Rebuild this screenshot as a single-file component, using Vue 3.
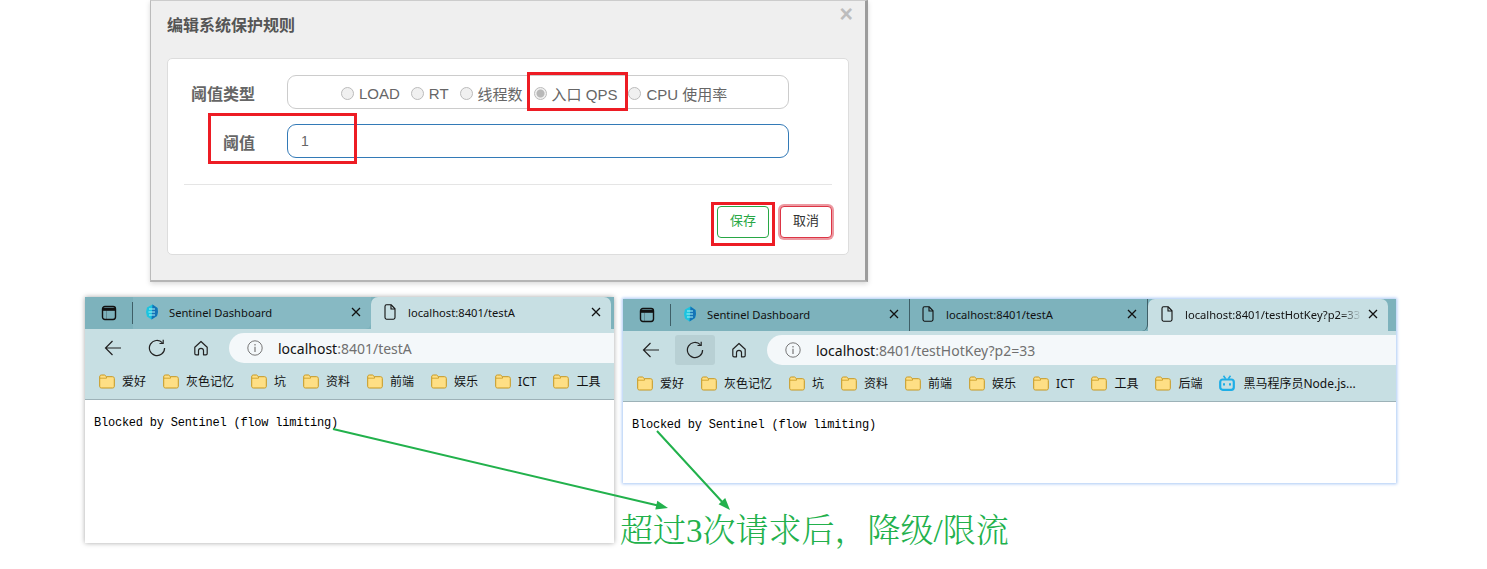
<script setup>
const types = [
  { label: 'LOAD' }, { label: 'RT' }, { label: '线程数' },
  { label: '入口 QPS', checked: true }, { label: 'CPU 使用率' }
]
const marks = ['爱好', '灰色记忆', '坑', '资料', '前端', '娱乐', 'ICT', '工具']
const windows = [
  {
    id: 'one', path: '/testA', reload: false, marks, app: false,
    tabs: [{ title: 'Sentinel Dashboard', fav: true, w: 238 }, { title: 'localhost:8401/testA', active: true, w: 240 }]
  },
  {
    id: 'two', path: '/testHotKey?p2=33', reload: true, marks: [...marks, '后端'], app: true,
    tabs: [
      { title: 'Sentinel Dashboard', fav: true, w: 238 },
      { title: 'localhost:8401/testA', w: 239, sep: true },
      { title: 'localhost:8401/testHotKey?p2=33', active: true, w: 240 }
    ]
  }
]
</script>

<template>
  <div class="canvas">
    <section class="dialog">
      <h4 class="dialog-title">编辑系统保护规则</h4>
      <span class="close">×</span>
      <div class="card">
        <div class="row">
          <label class="label">阈值类型</label>
          <div class="field radios">
            <span v-for="t in types" :key="t.label" class="radio-item">
              <i class="radio" :class="{ on: t.checked }"></i>{{ t.label }}
            </span>
          </div>
        </div>
        <div class="row">
          <label class="label">阈值</label>
          <div class="field input">1</div>
        </div>
        <div class="rule"></div>
        <div class="actions">
          <button class="btn save">保存</button>
          <button class="btn cancel">取消</button>
        </div>
      </div>
    </section>

    <article v-for="w in windows" :key="w.id" class="win" :class="w.id">
      <div class="strip">
        <div class="side">
          <svg width="16" height="16" viewBox="0 0 16 16" fill="none" stroke="#111" stroke-width="1.4">
            <rect x="1.500" y="1.500" width="13" height="13" rx="2.400" />
            <path d="M1.700 4.300h12.600" stroke-width="3" />
            <path d="M5.500 5.500V14" stroke="#111" stroke-opacity=".25" stroke-width="1" />
          </svg>
        </div>
        <span class="tab-sep"></span>
        <div
          v-for="t in w.tabs"
          :key="t.title"
          class="tab"
          :class="{ active: t.active, sep: t.sep }"
          :style="{ width: t.w + 'px' }"
        >
          <svg v-if="t.fav" class="fav" width="14" height="16" viewBox="0 0 14 16">
            <path d="M7.500 .5 12.500 4 13 8 12 12 6.500 15.500 2 12.500 1 8 2 3.500z" fill="#1cc4e0" />
            <path d="M7.500 .5 12.500 4 13 8 12 12 6.500 15.500z" fill="#1572b6" />
            <path d="M4 5h6M3.500 8h6.500M4 11h6" stroke="#a8f3f5" stroke-width="1.100" />
          </svg>
          <svg v-else class="doc" width="14" height="16" viewBox="0 0 14 16" fill="none" stroke="#111" stroke-width="1.100">
            <path d="M2 2.400C2 1.400 2.600 .8 3.500 .8H8.200L12 4.800V13.600C12 14.500 11.400 15.200 10.500 15.200H3.500C2.600 15.200 2 14.500 2 13.600z" />
            <path d="M8 1V5H12" />
          </svg>
          <span class="tab-title" :class="{ fade: t.title.length > 25 }">{{ t.title }}</span>
          <svg class="x" width="10" height="10" viewBox="0 0 10 10" stroke="#111" stroke-width="1.300">
            <path d="M1 1 9 9M9 1 1 9" />
          </svg>
        </div>
      </div>

      <div class="toolbar">
        <span class="tool">
          <svg width="18" height="18" viewBox="0 0 18 18" fill="none" stroke="#222" stroke-width="1.200">
            <path d="M17 9H1.500M8.500 2 1.500 9l7 7" />
          </svg>
        </span>
        <span class="tool" :class="{ hover: w.reload }">
          <svg width="18" height="18" viewBox="0 0 18 18" fill="none" stroke="#222" stroke-width="1.200">
            <path d="M14.500 3.800A7.600 7.600 0 1 0 16.600 9" />
            <path d="M15.200 .8v3.700h-3.700" />
          </svg>
        </span>
        <span class="tool">
          <svg width="16" height="16" viewBox="0 0 16 16" fill="none" stroke="#222" stroke-width="1.200">
            <path d="M1.800 7.200 8 1.500 14.200 7.200V13.500Q14.200 14.800 12.900 14.800H10.500V10.500Q10.500 8.300 8 8.300 5.500 8.300 5.500 10.500V14.800H3.100Q1.800 14.800 1.800 13.500z" stroke-linejoin="round" />
          </svg>
        </span>
        <div class="address">
          <svg width="16" height="16" viewBox="0 0 16 16" fill="none" stroke="#777" stroke-width="1">
            <circle cx="8" cy="8" r="7.200" />
            <path d="M8 6.800V12M8 4v1.400" stroke-width="1.200" />
          </svg>
          <span class="url"><b>localhost</b>:8401{{ w.path }}</span>
        </div>
      </div>

      <div class="bookmarks">
        <span v-for="m in w.marks" :key="m" class="mark">
          <svg width="16" height="15" viewBox="0 0 16 15">
            <path d="M.7 3C.7 1.600 1.400 1 2.500 1H5.500L7.500 2.700H13.500C14.600 2.700 15.300 3.400 15.300 4.500V12.300C15.300 13.400 14.600 14 13.500 14H2.500C1.400 14 .7 13.400 .7 12.300z" fill="#fedf85" stroke="#c8981e" stroke-width="1" />
            <path d="M1 4.200 7.500 4.200 7.500 2.700" fill="none" stroke="#c8981e" stroke-width=".8" />
          </svg>
          {{ m }}
        </span>
        <span v-if="w.app" class="mark app">
          <svg width="16" height="16" viewBox="0 0 16 16" fill="none" stroke="#1eaee6" stroke-width="2.200">
            <rect x="1.200" y="4.500" width="13.600" height="10.300" rx="2.500" />
            <path d="M4.500 .8 6.600 3.800M11.500 .8 9.400 3.800" stroke-width="1.500" />
            <path d="M5 8.300v2.200M11 8.300v2.200" stroke-width="2" />
          </svg>
          黑马程序员Node.js...
        </span>
      </div>

      <div class="page">Blocked by Sentinel (flow limiting)</div>
    </article>

    <i class="flag flag-qps"></i>
    <i class="flag flag-value"></i>
    <i class="flag flag-save"></i>

    <svg class="arrows" width="1487" height="569" viewBox="0 0 1487 569">
      <path d="M333 429 660 506M657 431 725 505" stroke="#22b14c" stroke-width="2" fill="none" />
      <path d="M668 508 655.300 509.600 657.300 500.800z" fill="#22b14c" />
      <path d="M730 510 718.600 504.300 725.200 498.100z" fill="#22b14c" />
    </svg>

    <p class="note">超过3次请求后，降级/限流</p>
  </div>
</template>

<style scoped>
.canvas {
  position: relative;
  width: 1487px;
  height: 569px;
  background: #fff;
  overflow: hidden;
  font-family: "Liberation Sans", "Noto Sans CJK SC", sans-serif;
}
.dialog {
  position: absolute;
  left: 150px;
  top: 0;
  width: 718px;
  height: 282px;
  box-sizing: border-box;
  padding: 1px 0 0 2px;
  background: #efefef;
  border-top: 1px solid #ccc;
  border-left: 1px solid #bbb;
  border-right: 3px solid #9c9c9c;
  border-bottom: 2px solid #b5b5b5;
  box-shadow: 0 2px 5px rgba(0, 0, 0, .15);
}
.dialog-title {
  margin: 0;
  padding: 13px 0 0 14px;
  height: 42px;
  box-sizing: border-box;
  font-size: 16px;
  line-height: 22px;
  font-weight: 700;
  color: #555;
}
.close {
  position: absolute;
  right: 12px;
  top: 0;
  font-size: 23px;
  line-height: 26px;
  font-weight: 700;
  color: #bdbdbd;
}
.card {
  margin: 14px 0 0 14px;
  width: 682px;
  height: 197px;
  box-sizing: border-box;
  padding: 16px 16px 0;
  background: #fff;
  border: 1px solid #ddd;
  border-radius: 5px;
}
.row {
  display: flex;
  margin-bottom: 15px;
}
.label {
  width: 71px;
  margin-right: 32px;
  padding-top: 9px;
  text-align: right;
  font-size: 16px;
  line-height: 22px;
  font-weight: 700;
  color: #666;
}
.field {
  width: 502px;
  height: 34px;
  box-sizing: border-box;
  border-radius: 9px;
  background: #fff;
  font-size: 15px;
  color: #666;
}
.radios {
  display: flex;
  align-items: center;
  padding: 2px 0 0 53px;
  border: 1px solid #ccc;
}
.radio-item {
  display: flex;
  align-items: center;
  margin-right: 11px;
  white-space: nowrap;
}
.radio {
  width: 13px;
  height: 13px;
  margin-right: 5px;
  box-sizing: border-box;
  border: 1px solid #bbb;
  border-radius: 50%;
  background: #f0f0f0;
}
.radio.on {
  background: radial-gradient(circle, #b8b8b8 0 3.5px, #f0f0f0 4.500px);
}
.input {
  padding: 6px 13px;
  line-height: 20px;
  border: 1px solid #337ab7;
  font-size: 14px;
}
.rule {
  height: 1px;
  margin-top: 26px;
  background: #e5e5e5;
}
.actions {
  display: flex;
  justify-content: flex-end;
  gap: 11px;
  margin: 21px 0 0 0;
}
.btn {
  height: 32px;
  padding: 0 0 3px;
  box-sizing: border-box;
  background: #fff;
  border-radius: 4px;
  font: 13px/1 "Liberation Sans", "Noto Sans CJK SC", sans-serif;
}
.save {
  width: 52px;
  border: 1px solid #28a745;
  color: #28a745;
}
.cancel {
  width: 52px;
  border: 1px solid #dc3545;
  color: #333;
  box-shadow: 0 0 0 2px rgba(220, 53, 69, .5);
}

.win {
  position: absolute;
  display: flex;
  flex-direction: column;
  font-family: "Noto Sans", "Noto Sans CJK SC", sans-serif;
  background: #fff;
}
.one {
  left: 85px;
  top: 297px;
  width: 529px;
  height: 246px;
  box-shadow: 0 0 5px rgba(0, 0, 0, .35);
}
.two {
  left: 623px;
  top: 299px;
  width: 773px;
  height: 184px;
  box-shadow: 0 0 3px 1px #a9c8f5;
}
.strip {
  display: flex;
  flex: none;
  height: 32px;
  background: #7db2bc;
}
.side {
  display: flex;
  flex: none;
  width: 47px;
  align-items: center;
  justify-content: center;
}
.tab-sep {
  flex: none;
  width: 1px;
  height: 22px;
  margin-top: 5px;
  background: #3f5f67;
}
.tab {
  display: flex;
  flex: none;
  align-items: center;
  box-sizing: border-box;
  padding: 0 10px 2px 12px;
  background: #87b9c3;
  border-bottom-right-radius: 6px;
  font-size: 11.2px;
  color: #111;
}
.two .tab {
  background: #7db2bc;
}
.tab.sep {
  padding-left: 11px;
  border-left: 1px solid #3f5f67;
  border-right: 1px solid #3f5f67;
  background-clip: padding-box;
}
.two .tab.active,
.tab.active {
  background: #c7dfe3;
  border-radius: 7px 7px 0 0;
}
.fav,
.doc {
  flex: none;
  margin-right: 10px;
}
.doc {
  margin-right: 11px;
}
.tab-title {
  flex: 1;
  min-width: 0;
  overflow: hidden;
  white-space: nowrap;
}
.fade {
  -webkit-mask-image: linear-gradient(to right, #000 88%, transparent 100%);
  mask-image: linear-gradient(to right, #000 88%, transparent 100%);
}
.x {
  flex: none;
  margin-left: 6px;
}
.toolbar {
  display: flex;
  flex: none;
  align-items: center;
  height: 34px;
  padding: 4px 0 0 8px;
  box-sizing: border-box;
  background: #c7dfe3;
}
.tool {
  display: flex;
  flex: none;
  width: 40px;
  height: 30px;
  margin-right: 4px;
  align-items: center;
  justify-content: center;
  border-radius: 3px;
}
.tool.hover {
  background: #b8d0d4;
}
.address {
  display: flex;
  flex: 1;
  height: 30px;
  margin-left: 4px;
  padding-left: 18px;
  gap: 15px;
  align-items: center;
  background: #f4f8fa;
  border-radius: 15px 0 0 15px;
  font-size: 14px;
  color: #707070;
}
.url b {
  font-weight: 400;
  color: #111;
}
.bookmarks {
  display: flex;
  flex: none;
  align-items: center;
  height: 37px;
  padding-left: 14px;
  box-sizing: border-box;
  background: #c7dfe3;
  border-bottom: 1px solid #9db2b8;
}
.mark {
  display: flex;
  flex: none;
  align-items: center;
  gap: 7px;
  margin-right: 17px;
  font-size: 12px;
  color: #111;
  white-space: nowrap;
}
.mark.app {
  gap: 8px;
}
.page {
  flex: 1;
  padding: 15px 0 0 9px;
  font: 12px/16px "Liberation Mono", monospace;
  letter-spacing: -.23px;
  color: #000;
  white-space: nowrap;
}

.flag {
  position: absolute;
  box-sizing: border-box;
  border: 3px solid #ed1c24;
}
.flag-qps { left: 527px; top: 72px; width: 101px; height: 39px; }
.flag-value { left: 208px; top: 113px; width: 149px; height: 51px; }
.flag-save { left: 711px; top: 202px; width: 64px; height: 44px; }

.arrows {
  position: absolute;
  left: 0;
  top: 0;
  pointer-events: none;
}
.note {
  position: absolute;
  left: 620px;
  top: 511px;
  margin: 0;
  font: 300 33px/40px "Liberation Serif", "Noto Serif CJK SC", "Noto Sans CJK SC", serif;
  color: #22b14c;
  white-space: nowrap;
}
</style>
